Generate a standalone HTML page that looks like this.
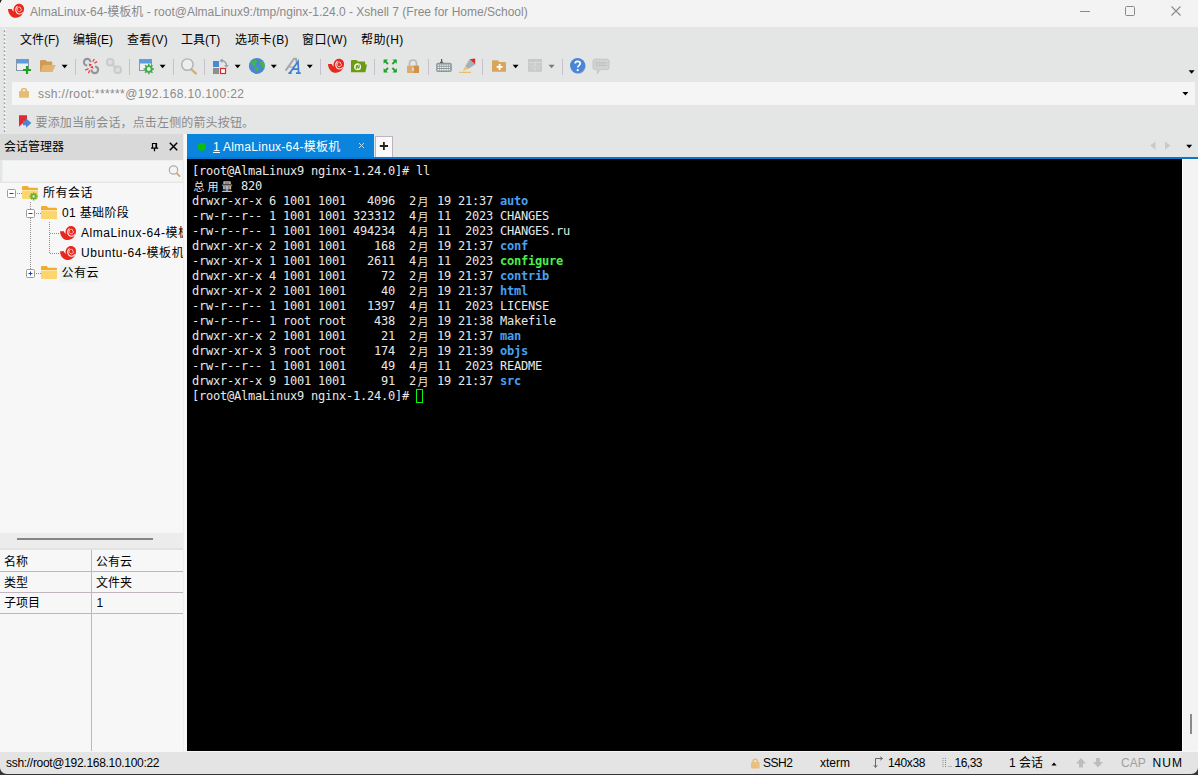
<!DOCTYPE html>
<html lang="zh-CN">
<head>
<meta charset="utf-8">
<title>Xshell</title>
<style>
*{box-sizing:border-box;margin:0;padding:0}
html,body{width:1198px;height:775px;overflow:hidden;background:#e4e5e5}
body{position:relative;font-family:"Liberation Sans","Noto Sans CJK SC",sans-serif;font-size:12px;color:#000}
.abs{position:absolute}
#titlebar{left:0;top:0;width:1198px;height:27px;background:#f3f3f3}
#title{left:30px;top:4px;height:16px;line-height:16px;color:#8a8a8a;white-space:nowrap;font-size:12px}
#menubar{left:0;top:27px;width:1198px;height:53px;background:#e4e5e5}
.menu{top:32px;height:16px;line-height:16px;white-space:nowrap;font-size:12px;color:#000}
#addr{left:12px;top:82px;width:1183px;height:23px;background:#f5f5f5}
#addrtxt{letter-spacing:.38px;left:38px;top:85.5px;height:16px;line-height:16px;color:#8a8a8a;white-space:nowrap}
#hint{letter-spacing:.15px;left:35.5px;top:114.5px;height:16px;line-height:16px;color:#8a8a8a;white-space:nowrap}
#smhead{left:0;top:134px;width:183px;height:26px;background:#d9d9d9}
#smtitle{left:4px;top:139px;height:16px;line-height:16px;white-space:nowrap}
#search{left:2px;top:160px;width:181px;height:22px;background:#f5f5f5;border:1px solid #ebefef}
#tree{left:0;top:183px;width:183px;height:350px;background:#f7f7f7}
.tl{height:16px;line-height:16px;white-space:nowrap;font-size:12px}
#props{left:0;top:550px;width:183px;height:201px;background:#f7f7f7}
#tab{left:187px;top:134px;width:187px;height:25px;background:#0a84dc}
#tabtxt{letter-spacing:.27px;left:213px;top:139px;height:16px;line-height:16px;color:#fff;white-space:nowrap}
#tabline{left:187px;top:157px;width:1011px;height:2px;background:#0877cd}
#plus{left:375px;top:136px;width:18px;height:21px;background:#fafafa;border:1px solid #bfb3c2;border-bottom:0}
#term{left:187px;top:159px;width:995px;height:592px;background:#000}
#scroll{left:1182px;top:159px;width:16px;height:592px;background:#f3f3f3;border-left:1px solid #fff;border-top:1px solid #fff}
#status{left:0;top:751px;width:1198px;height:24px;background:#e4e4e4;border-top:1px solid #f6f6f6}
.st{top:755px;height:16px;line-height:16px;white-space:nowrap}
pre{position:absolute;left:192px;top:164px;font-family:"DejaVu Sans Mono","Noto Sans CJK SC",monospace;font-size:12px;line-height:15px;letter-spacing:-0.224px;color:#e8e8e8;white-space:pre}
pre b{font-weight:bold}
.d{color:#47a0f2}
.x{color:#4cf04c}
.c{display:inline-block;width:14px;height:15px;text-align:center;letter-spacing:0;font-size:11px;vertical-align:top;position:relative;top:.9px}
</style>
</head>
<body>
<div id="titlebar" class="abs"></div>
<div id="title" class="abs">AlmaLinux-64-模板机 - root@AlmaLinux9:/tmp/nginx-1.24.0 - Xshell 7 (Free for Home/School)</div>
<div id="menubar" class="abs"></div>
<div class="abs menu" style="left:20px">文件(F)</div>
<div class="abs menu" style="left:73px">编辑(E)</div>
<div class="abs menu" style="left:127px;letter-spacing:.2px">查看(V)</div>
<div class="abs menu" style="left:181px">工具(T)</div>
<div class="abs menu" style="left:235px;letter-spacing:.3px">选项卡(B)</div>
<div class="abs menu" style="left:302px;letter-spacing:.4px">窗口(W)</div>
<div class="abs menu" style="left:361px;letter-spacing:.4px">帮助(H)</div>
<div id="addr" class="abs"></div>
<div id="addrtxt" class="abs">ssh://root:******@192.168.10.100:22</div>
<div id="hint" class="abs">要添加当前会话，点击左侧的箭头按钮。</div>
<div class="abs" style="left:183px;top:134px;width:4px;height:617px;background:#f8f8f8;border-left:1px solid #ebeeef"></div>
<div id="smhead" class="abs"></div>
<div id="smtitle" class="abs">会话管理器</div>
<div id="search" class="abs"></div>
<div id="tree" class="abs"></div>
<div class="abs tl" style="left:43px;top:185px;letter-spacing:.5px">所有会话</div>
<div class="abs tl" style="left:62px;top:205px;letter-spacing:.35px">01 基础阶段</div>
<div class="abs tl" style="left:81px;top:225px;width:102px;overflow:hidden;letter-spacing:.55px">AlmaLinux-64-模板机</div>
<div class="abs tl" style="left:81px;top:245px;width:102px;overflow:hidden;letter-spacing:.55px">Ubuntu-64-模板机</div>
<div class="abs" style="left:60px;top:265px;width:39px;height:17px;background:#f0f1f1"></div>
<div class="abs tl" style="left:61.5px;top:265px;letter-spacing:.5px">公有云</div>
<div id="props" class="abs"></div>
<div class="abs tl" style="left:4px;top:554px">名称</div>
<div class="abs tl" style="left:4px;top:575px">类型</div>
<div class="abs tl" style="left:4px;top:595px">子项目</div>
<div class="abs tl" style="left:96px;top:554px">公有云</div>
<div class="abs tl" style="left:96px;top:575px">文件夹</div>
<div class="abs tl" style="left:96.5px;top:595px">1</div>
<div id="tab" class="abs"></div>
<div id="tabtxt" class="abs"><u>1</u> AlmaLinux-64-模板机</div>
<div id="tabline" class="abs"></div>
<div id="plus" class="abs"></div>
<div id="term" class="abs"></div>
<div id="scroll" class="abs"></div>
<pre>[root@AlmaLinux9 nginx-1.24.0]# ll
<span class="c">总</span><span class="c">用</span><span class="c">量</span> 820
drwxr-xr-x 6 1001 1001   4096  2<span class="c">月</span> 19 21:37 <b class="d">auto</b>
-rw-r--r-- 1 1001 1001 323312  4<span class="c">月</span> 11  2023 CHANGES
-rw-r--r-- 1 1001 1001 494234  4<span class="c">月</span> 11  2023 CHANGES.ru
drwxr-xr-x 2 1001 1001    168  2<span class="c">月</span> 19 21:37 <b class="d">conf</b>
-rwxr-xr-x 1 1001 1001   2611  4<span class="c">月</span> 11  2023 <b class="x">configure</b>
drwxr-xr-x 4 1001 1001     72  2<span class="c">月</span> 19 21:37 <b class="d">contrib</b>
drwxr-xr-x 2 1001 1001     40  2<span class="c">月</span> 19 21:37 <b class="d">html</b>
-rw-r--r-- 1 1001 1001   1397  4<span class="c">月</span> 11  2023 LICENSE
-rw-r--r-- 1 root root    438  2<span class="c">月</span> 19 21:38 Makefile
drwxr-xr-x 2 1001 1001     21  2<span class="c">月</span> 19 21:37 <b class="d">man</b>
drwxr-xr-x 3 root root    174  2<span class="c">月</span> 19 21:39 <b class="d">objs</b>
-rw-r--r-- 1 1001 1001     49  4<span class="c">月</span> 11  2023 README
drwxr-xr-x 9 1001 1001     91  2<span class="c">月</span> 19 21:37 <b class="d">src</b>
[root@AlmaLinux9 nginx-1.24.0]# </pre>
<div class="abs" style="left:416px;top:389px;width:7px;height:14px;border:1px solid #0df20d"></div>
<div id="status" class="abs"></div>
<svg class="abs" style="left:0;top:0" width="1198" height="775" viewBox="0 0 1198 775">
<defs>
<path id="dd" d="M0 0h6l-3 3.5z"/>
<g id="shell">
<path d="M0 5.2H3.8C4.2 6.4 4.8 7.3 5.8 8C5.5 7 5.4 6 5.6 5C6 2 8.4 0 11 0C14 0 16 2.4 16 5C16 10 12.4 14 7.8 14C3.4 14 .2 10.4 0 5.2Z" fill="#e8271d"/>
<path d="M9.5 2.5C7.4 3.9 7.1 6.9 8.7 8.9C10.3 10.8 13.3 10.8 15 8.4" fill="none" stroke="#fff" stroke-width="1.1" opacity=".92"/>
<path d="M12.8 3.9C11.5 2.7 9.3 3.4 9.1 5.3C8.9 7.3 11 8.5 12.6 7.4C13.9 6.4 13.5 4.5 12.1 4.5" fill="none" stroke="#fff" stroke-width=".9" opacity=".8"/>
</g>
<g id="fold">
<path d="M0 1.2C0 .5.5 0 1.2 0H5.6L7.2 1.8H14.8C15.5 1.8 16 2.3 16 3V5H0Z" fill="#f1ad2b"/>
<path d="M0 4H16V12C16 12.6 15.5 13 15 13H1C.5 13 0 12.6 0 12Z" fill="#fbd66f"/>
<path d="M0 4H16V5H0Z" fill="#fde9a5"/>
</g>
<g id="sepv"><path d="M.5 1V17" stroke="#c9bfcc" stroke-width="1"/></g>
</defs>
<!-- window corner -->
<path d="M0 0H1.5V1H1V2.5H0Z" fill="#222"/>
<!-- title icon -->
<use href="#shell" x="8" y="3.8"/>
<!-- window controls -->
<path d="M1080 11.5H1090" stroke="#8a8a8a" stroke-width="1"/>
<rect x="1125.5" y="6.5" width="9" height="9" rx="1" fill="none" stroke="#8a8a8a"/>
<path d="M1171.5 6.5L1180.5 15.5M1180.5 6.5L1171.5 15.5" stroke="#8a8a8a" stroke-width="1.1"/>
<!-- grippers -->
<path d="M5 29V132" stroke="#fbfbfb" stroke-width="2" stroke-dasharray="2 2"/><path d="M4.5 30V133" stroke="#a9a9a9" stroke-width="1.4" stroke-dasharray="2 2"/>
<!-- toolbar -->
<g>
<!-- new session -->
<rect x="16.5" y="59.5" width="12" height="11" fill="#eef0f2" stroke="#8796a5"/>
<rect x="17" y="60" width="11" height="3.5" fill="#5b9de0"/>
<path d="M23 70H31M27 66V74" stroke="#18a418" stroke-width="2.2"/>
<!-- open folder -->
<path d="M40 61.2C40 60.5 40.5 60 41.2 60H45.5L47 61.6H51.2C51.8 61.6 52.2 62 52.2 62.6V72H40Z" fill="#d29b55"/>
<path d="M43.2 65H55.8L52.4 72H40Z" fill="#e3b470"/>
<use href="#dd" x="61.6" y="64.8"/>
<use href="#sepv" x="75" y="58"/>
<!-- disconnect -->
<g fill="none" stroke="#92969a" stroke-width="2.1">
<circle cx="87.2" cy="62.2" r="3.3" stroke-dasharray="15.7 5" stroke-dashoffset="15.7"/>
<circle cx="94.8" cy="69.8" r="3.3" stroke-dasharray="10.4 5 5.3 0"/>
</g>
<path d="M88.6 63.4L92 64.6L89.8 66.8ZM93.6 68.8L90.2 67.6L92.4 65.4Z" fill="#e8353a"/>
<path d="M92.8 61.6L94.4 59M94.4 63.2L97.2 61.6M88.6 68.6L85.2 70.2M89.8 70.4L88.4 73.2" stroke="#ea4a4e" stroke-width="1.4"/>
<!-- chain gray -->
<g fill="#dedede" stroke="#cbcbcb" stroke-width="2">
<rect x="107" y="59" width="6.5" height="6.5" rx="2.8"/>
<rect x="114.5" y="66.5" width="6.5" height="6.5" rx="2.8"/>
<path d="M111.5 63.5L116.5 68.5" stroke-width="2.4"/>
</g>
<use href="#sepv" x="129" y="58"/>
<!-- settings window -->
<rect x="139.5" y="59.5" width="12" height="11" fill="#eef0f2" stroke="#8796a5"/>
<rect x="140" y="60" width="11" height="3.5" fill="#5b9de0"/>
<g transform="translate(148.8 69)">
<circle r="2.9" fill="none" stroke="#3cb043" stroke-width="1.9"/>
<path d="M0-5.2V5.2M-5.2 0H5.2M-3.7-3.7L3.7 3.7M-3.7 3.7L3.7-3.7" stroke="#3cb043" stroke-width="1.5"/>
<circle r="1.9" fill="#eceff1"/>
</g>
<use href="#dd" x="159.6" y="64.8"/>
<use href="#sepv" x="173" y="58"/>
<!-- magnifier -->
<path d="M191.6 69.6L196 73.6" stroke="#dcae68" stroke-width="2.3" stroke-linecap="round"/>
<circle cx="187.4" cy="64.6" r="5.7" fill="#ededed" stroke="#b3aeb5" stroke-width="1.4"/>
<use href="#sepv" x="204" y="58"/>
<!-- squares -->
<rect x="213" y="61" width="6" height="6" fill="#4a88d8"/>
<rect x="213" y="68" width="6" height="6" fill="#8e8e8e"/>
<rect x="220.5" y="68.5" width="5" height="5" fill="#fff" stroke="#e0252d" stroke-width="1.2"/>
<path d="M221 60.6C224.5 60.3 226.6 62.8 226.6 65.8" fill="none" stroke="#9aa0a4" stroke-width="1.4"/>
<path d="M219.4 60.8L222.6 58.4V63ZM224.2 65L228.8 65L226.5 67.8Z" fill="#9aa0a4"/>
<use href="#dd" x="234.6" y="64.8"/>
<!-- globe -->
<circle cx="256.9" cy="65.9" r="8" fill="#4a86d3"/>
<path d="M250.8 62C252 60 255 59 257.2 60.2C257.4 62 255.8 62.6 256 64.2C255.6 65.8 254.8 66.8 253.4 66.2C251.8 65.6 250.2 63.8 250.8 62ZM259.8 62C261.4 60.8 263.6 61.6 264.4 63.4C265 65.4 264.6 67.6 263.4 69C262.2 68.4 262.2 66.6 261.2 65.6C260.2 64.6 259.2 63.4 259.8 62ZM254.6 67.2C256 66.4 258.2 67 258.6 68.6C258.8 70 258 71.2 256.8 71.4C255.4 70.8 254.2 68.8 254.6 67.2Z" fill="#3fb54a"/>
<use href="#dd" x="270.8" y="64.8"/>
<!-- fonts A -->
<path d="M285.6 70.6L294 58.8H296L297 64" fill="none" stroke="#a6a6a6" stroke-width="1.9"/>
<path d="M288.6 67H294.5" stroke="#a8a8a8" stroke-width="1.2"/>
<path d="M288.4 73.2H291.6M296 73.2H300.8M289.8 73L298 61.4L298.6 73M292.6 69.2H298.4" fill="none" stroke="#3f7fd0" stroke-width="1.7"/>
<use href="#dd" x="306.8" y="64.8"/>
<use href="#sepv" x="320" y="58"/>
<!-- xshell swirl -->
<use href="#shell" x="328" y="58.8"/>
<!-- green folder -->
<path d="M351 61.2C351 60.5 351.5 60 352.2 60H356.4L358 61.6H364.2C364.8 61.6 365.2 62 365.2 62.6V64.4H367L365.4 72.2H351Z" fill="#6b9a17"/>
<circle cx="357.6" cy="66.8" r="3.5" fill="#f4f7ec"/>
<path d="M356.3 69.2V66.4C356.3 65.4 357.7 65.4 357.7 66.4V67.2C357.7 68.2 359.1 68.2 359.1 67.2V64.4" fill="none" stroke="#6b9a17" stroke-width="1.1"/>
<use href="#sepv" x="374" y="58"/>
<!-- fullscreen -->
<g stroke="#1ea12c" stroke-width="1.8" fill="#1ea12c">
<path d="M384.4 60.4L388 64M396 60.4L392.4 64M384.4 71.6L388 68M396 71.6L392.4 68"/>
<path d="M383.6 59.4H388L383.6 63.8ZM396.8 59.4H392.4L396.8 63.8ZM383.6 72.6H388L383.6 68.2ZM396.8 72.6H392.4L396.8 68.2Z" stroke="none"/>
</g>
<!-- lock -->
<path d="M409.5 66.5V63.6C409.5 58.8 416.5 58.8 416.5 63.6V66.5" fill="none" stroke="#b6bac6" stroke-width="1.7"/>
<rect x="407" y="65.8" width="12" height="7.2" rx=".8" fill="#dcab69"/>
<rect x="413.6" y="65.8" width="5.4" height="7.2" fill="#cf9248"/>
<rect x="412.2" y="67.2" width="1.7" height="4" rx=".7" fill="#d3dbea"/>
<use href="#sepv" x="428" y="58"/>
<!-- keyboard -->
<path d="M441.6 59V62.6M440 62.4H443.2" stroke="#50585c" stroke-width="1.2"/>
<rect x="436.2" y="62.7" width="15.6" height="9.3" rx="1.8" fill="#8d9698"/>
<path d="M437.6 65.1H450.8M437.6 67.4H450.8M437.6 69.7H450.8" stroke="#eef1f1" stroke-width="1.4" stroke-dasharray="1.6 .6"/>
<!-- highlighter -->
<path d="M469.6 59.2L475.2 58.4V64.6Z" fill="#e0252d"/>
<path d="M469.6 59.2L475.2 64.6L473.6 65.4L468.4 68.8L465.2 66.2Z" fill="#a9adb4"/>
<path d="M465.2 66.2L468.4 68.8L464.8 70.6L462.8 70.6Z" fill="#efc46a"/>
<path d="M459 72.4H471" stroke="#ebbd6e" stroke-width="1.2"/>
<use href="#sepv" x="482" y="58"/>
<!-- folder plus -->
<path d="M492 61.4C492 60.7 492.5 60.2 493.2 60.2H497.6L499.4 62H504.8C505.5 62 506 62.5 506 63.2V71.8H492Z" fill="#d9a55c"/>
<path d="M496.6 66.9H502.6M499.6 63.9V69.9" stroke="#fff" stroke-width="1.8"/>
<use href="#dd" x="512.6" y="64.8"/>
<!-- gray grid -->
<rect x="528" y="59" width="14" height="12.8" fill="#c9c9c9"/>
<path d="M528.8 62.6H541.2M535 62.6V71" stroke="#dedede" stroke-width="1"/>
<path d="M530 64.6L533.4 69.6M533.4 64.6L530 69.6M536.6 64.6L540 69.6M540 64.6L536.6 69.6" stroke="#d8d8d8" stroke-width=".8"/>
<use href="#dd" x="548.6" y="64.8" fill="#777"/>
<use href="#sepv" x="562" y="58"/>
<!-- help -->
<circle cx="578.2" cy="66.2" r="7.5" fill="#a3a8b5"/>
<circle cx="577.6" cy="65.6" r="7.6" fill="#4a86d3"/>
<path d="M575.2 63.6C575.2 60.6 580.2 60.6 580.2 63.6C580.2 65.4 577.7 65.4 577.7 67.6" fill="none" stroke="#fff" stroke-width="1.7"/>
<circle cx="577.7" cy="70.2" r="1.1" fill="#fff"/>
<!-- speech -->
<path d="M594.8 59.2H607.2C608.2 59.2 609 60 609 61V67.8C609 68.8 608.2 69.6 607.2 69.6H600L597.4 73.6V69.6H594.8C593.8 69.6 593 68.8 593 67.8V61C593 60 593.8 59.2 594.8 59.2Z" fill="#d2d2d2" stroke="#c0c0c0" stroke-width=".8"/>
<path d="M595.6 62.8H606.4M595.6 65.4H606.4" stroke="#bdbdbd" stroke-width="1.3" stroke-dasharray="2.6 .6"/>
<use href="#dd" x="1188.6" y="70.2"/>
</g>
<!-- addr -->
<g>
<path d="M21.6 92V91C21.6 87.8 26.4 87.8 26.4 91V92" fill="none" stroke="#e6bd72" stroke-width="1.9"/>
<rect x="19" y="91" width="10" height="6.8" rx="1.2" fill="#e6bd72"/>
<use href="#dd" x="1182.4" y="92"/>
</g>
<!-- hint flag -->
<path d="M19 115.2H27V123.5H22.5L19 126.8Z" fill="#e02a31"/>
<path d="M26 118.2L31.4 123L26 127.8V125.2H23V120.8H26Z" fill="#4a86d3"/>
<!-- pin & close -->
<path d="M152.5 148V143.5H156.5V148M156 143V148" fill="none" stroke="#000" stroke-width="1.2"/><path d="M151 148.2H158.2M154.5 148V151.2" stroke="#000" stroke-width="1.3"/>
<path d="M169.8 142.8L177.2 150.2M177.2 142.8L169.8 150.2" stroke="#000" stroke-width="1.5"/>
<!-- search icon -->
<path d="M176.6 173.2L179.6 176.2" stroke="#d9a860" stroke-width="1.8" stroke-linecap="round"/>
<circle cx="173.5" cy="170" r="4.2" fill="#f4f4f4" stroke="#b0adb2" stroke-width="1.2"/>
<!-- tab -->
<circle cx="201.8" cy="146.8" r="4" fill="#0dbd0d"/>
<path d="M359 143L364 148M364 143L359 148" stroke="#c4e0f6" stroke-width="1"/>
<path d="M379.8 146H388M383.9 142V150" stroke="#222" stroke-width="1.8"/>
<path d="M1155.5 141.4V149.8L1150.2 145.6ZM1165 141.4V149.8L1170.3 145.6Z" fill="#c9c9c9"/>
<use href="#dd" x="1186.2" y="144.8"/>
<!-- tree -->
<g>
<g stroke="#8c8c8c" stroke-width="1" stroke-dasharray="1 1" fill="none">
<path d="M17 193.5H22M30.5 202V269M36 213.5H41M49.5 222V254M50 233.5H60M50 253.5H60M36 273.5H41"/>
</g>
<g fill="#fff" stroke="#9b9b9b">
<rect x="7.5" y="189.5" width="8" height="8" rx="1"/>
<rect x="26.5" y="209.5" width="8" height="8" rx="1"/>
<rect x="26.5" y="269.5" width="8" height="8" rx="1"/>
</g>
<path d="M9.5 193.5H13.5M28.5 213.5H32.5M28.5 273.5H32.5M30.5 271.5V275.5" stroke="#2a3f9a" stroke-width="1"/>
<use href="#fold" x="22" y="186"/>
<g transform="translate(33.6 196.4)">
<path d="M0-4V4M-4 0H4M-2.8-2.8L2.8 2.8M-2.8 2.8L2.8-2.8" stroke="#6fae2e" stroke-width="1.7"/>
<circle r="2.5" fill="#6fae2e"/><circle r="1.1" fill="#f4f8e8"/>
</g>
<use href="#fold" x="41" y="206"/>
<use href="#fold" x="41" y="266"/>
<use href="#shell" x="60" y="226"/>
<use href="#shell" x="60" y="246"/>
</g>
<!-- splitter handle -->
<rect x="0" y="533" width="183" height="17" fill="#ececec"/><rect x="0" y="548" width="183" height="2" fill="#e2e2e2"/><path d="M17 539H153" stroke="#858585" stroke-width="2"/>
<!-- props grid -->
<path d="M0 571.5H183M0 592.5H183M0 613.5H183M91.5 550V751" stroke="#bfb6c0" stroke-width="1" fill="none"/>
<!-- status icons -->
<g>
<path d="M753 762.5V761.4C753 758.6 757.4 758.6 757.4 761.4V762.5" fill="none" stroke="#e4bb78" stroke-width="1.4"/>
<rect x="751" y="762" width="8.6" height="6.4" rx="1" fill="#e9c07c"/>
<path d="M875.5 767V758.5H882M873.8 765.2L875.5 767.5L877.2 765.2M880.2 756.8L882.5 758.5L880.2 760.2" fill="none" stroke="#666" stroke-width="1"/>
<path d="M943 758V767M945.5 758V767M948.5 766.5H949.5M950.5 766.5H951.5" stroke="#888" stroke-width="1" stroke-dasharray="1 1"/>
<path d="M1051.4 765.6L1054 762.4L1056.6 765.6Z" fill="#000"/>
<path d="M1081 758L1086 763.6H1083V767.6H1079V763.6H1076ZM1098 767.6L1093 762H1096V758H1100V762H1103Z" fill="#bdbdbd"/>
</g>
<path d="M0 767C0 771 3 774 7 774H1191C1195 774 1198 771 1198 767V775H0Z" fill="#353535"/>
<!-- scrollbar marker -->
<path d="M1191 714V734" stroke="#8a8a8a" stroke-width="2"/>
</svg>

<div class="abs st" style="left:6px;letter-spacing:-.3px">ssh://root@192.168.10.100:22</div>
<div class="abs st" style="left:763px;letter-spacing:-.5px">SSH2</div>
<div class="abs st" style="left:820px">xterm</div>
<div class="abs st" style="left:888px;letter-spacing:-.4px">140x38</div>
<div class="abs st" style="left:954.5px;letter-spacing:-.5px">16,33</div>
<div class="abs st" style="left:1009px">1 会话</div>
<div class="abs st" style="left:1121px;color:#a0a0a0">CAP</div>
<div class="abs st" style="left:1152.5px;letter-spacing:1.1px">NUM</div>
</body>
</html>
